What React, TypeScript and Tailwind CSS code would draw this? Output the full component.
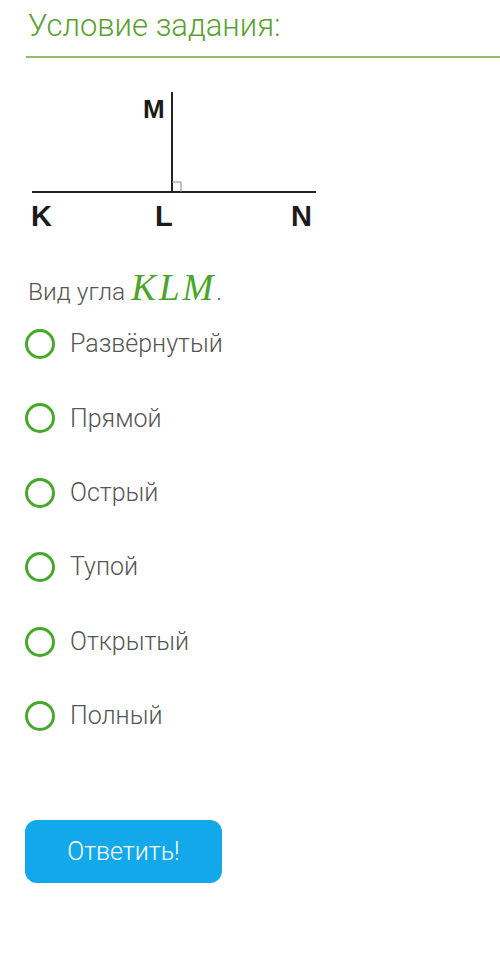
import React from "react";

const options = ["Развёрнутый", "Прямой", "Острый", "Тупой", "Открытый", "Полный"];

function AngleDiagram() {
  return (
    <svg width="300" height="150" viewBox="0 0 300 150" className="block">
      <line x1="7" y1="106" x2="291" y2="106" stroke="#222" strokeWidth="2" />
      <line x1="147" y1="6" x2="147" y2="106" stroke="#222" strokeWidth="2" />
      <polyline points="147,96 156,96 156,106" fill="none" stroke="#888" strokeWidth="1" />
      <g fontFamily="'Liberation Sans', Arial, sans-serif" fontWeight="700" fill="#1a1a1a">
        <text x="118" y="32" fontSize="26">M</text>
        <text x="6" y="140" fontSize="29">K</text>
        <text x="130" y="140" fontSize="29">L</text>
        <text x="266" y="140" fontSize="29">N</text>
      </g>
    </svg>
  );
}

export default function App() {
  return (
    <div className="min-h-[975px] w-[500px] bg-white" style={{ fontFamily: "Roboto, 'Liberation Sans', sans-serif" }}>
      <div className="pl-[26px] pt-[6px]">
        <h2 className="pl-[2px] text-[31px] font-light leading-[40px] text-[#5b9f32]">Условие задания:</h2>
        <div className="mt-[10px] h-[2px] bg-[#8cc06c]" />
      </div>

      <div className="mt-[28px] pl-[25px]">
        <AngleDiagram />
      </div>

      <div className="px-[25px]">
        <p className="mt-[34px] pl-[3px] text-[24.5px] font-light leading-[36px] text-[#555]">
          Вид угла{" "}
          <span
            className="text-[37px] italic tracking-[3px] text-[#4aa52a]"
            style={{ fontFamily: "'Liberation Serif', 'Times New Roman', serif" }}
          >
            KLM
          </span>
          .
        </p>

        <div className="mt-[19px] flex flex-col gap-[44.4px]">
          {options.map((o) => (
            <label key={o} className="flex h-[30px] items-center gap-[15px]">
              <span className="h-[30px] w-[30px] rounded-full border-[3.5px] border-[#47a82b]" />
              <span className="text-[25px] font-light text-[#555]">{o}</span>
            </label>
          ))}
        </div>

        <button
          type="button"
          className="mt-[89px] flex h-[63px] w-[197px] items-center justify-center rounded-[12px] bg-[#13a8ea] text-[25px] font-light text-white"
        >
          Ответить!
        </button>
      </div>
    </div>
  );
}
